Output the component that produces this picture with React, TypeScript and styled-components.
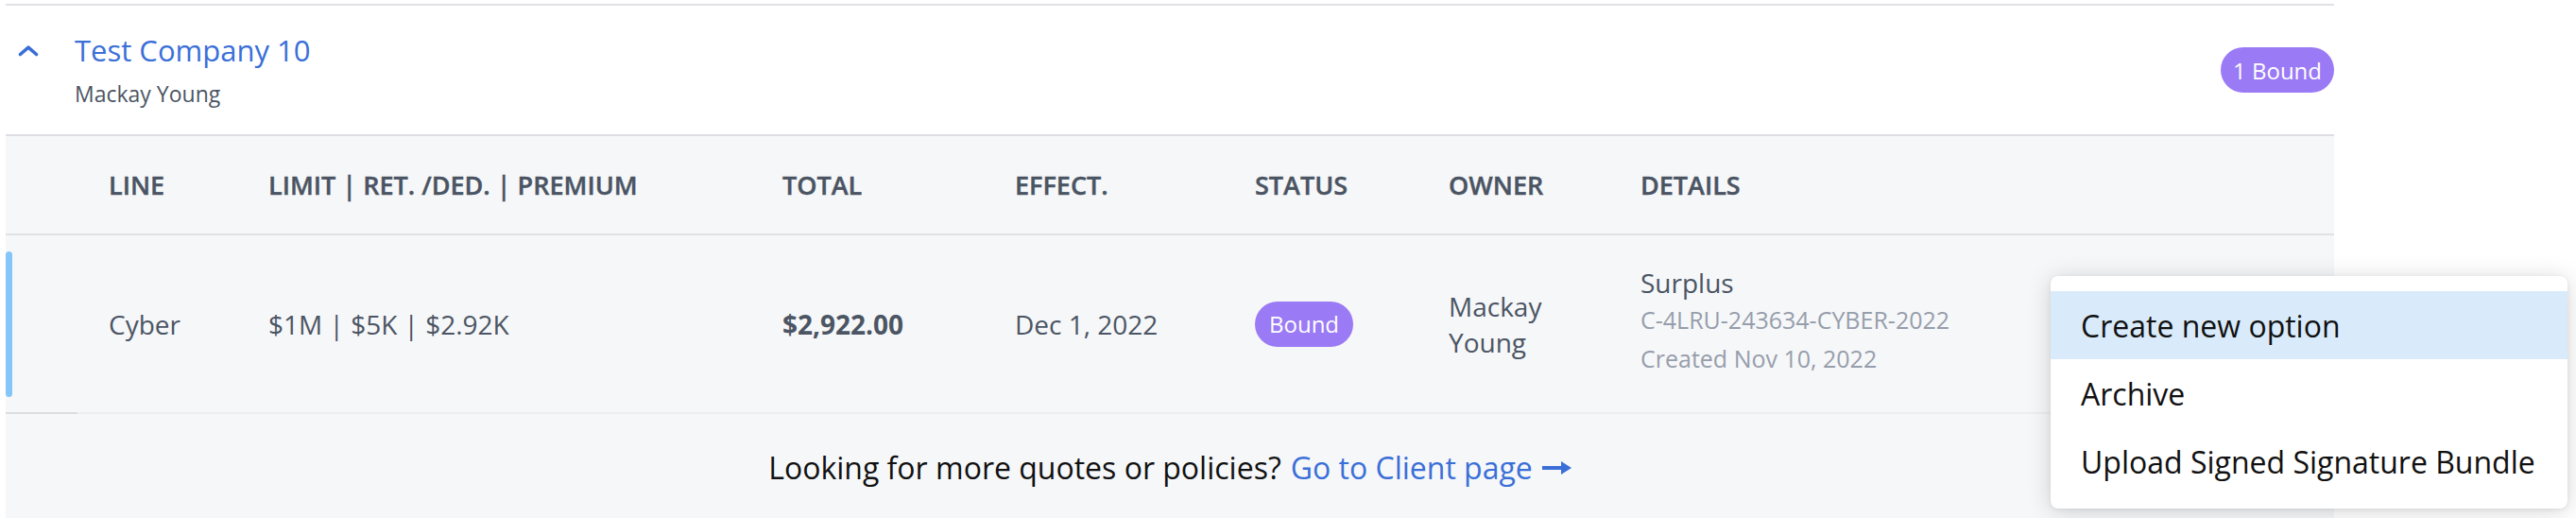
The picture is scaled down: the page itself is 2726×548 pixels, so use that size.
import React from "react";
import styled, { createGlobalStyle } from "styled-components";

const GlobalStyle = createGlobalStyle`
  html, body { margin: 0; padding: 0; background: #ffffff; }
  body { font-family: "Open Sans", "Noto Sans", Arial, sans-serif; }
  * { box-sizing: border-box; }
`;

const Page = styled.div`
  position: relative;
  width: 2726px;
  height: 548px;
  overflow: hidden;
  padding: 4px 0 0 6px;
  background: #ffffff;
`;

const Card = styled.section`
  width: 2464px;
  border-top: 2px solid #dfe1e5;
  display: flex;
  flex-direction: column;
`;

const GroupHeader = styled.header`
  display: flex;
  align-items: center;
  min-height: 138px;
  padding-left: 13px;
  background: #ffffff;
  border-bottom: 2px solid #dcdee2;
`;

const Chevron = styled.svg`
  align-self: flex-start;
  width: 22px;
  height: 12px;
  flex: none;
  margin: 42px 38px 0 0;
`;

const TitleBlock = styled.div`
  display: flex;
  flex-direction: column;
  flex: 1;
`;

const Title = styled.a`
  font-size: 31px;
  line-height: 40px;
  color: #3a6fd8;
  text-decoration: none;
`;

const Subtitle = styled.div`
  margin-top: 10px;
  font-size: 23px;
  line-height: 32px;
  color: #4b5563;
`;

const Pill = styled.span<{ $w: number }>`
  display: inline-flex;
  align-items: center;
  justify-content: center;
  width: ${(p) => p.$w}px;
  height: 48px;
  border-radius: 24px;
  background: #9a7af5;
  color: #ffffff;
  font-size: 24px;
  font-weight: 500;
  white-space: nowrap;
`;

const gridCols = "109px 169px 544px 246px 254px 205px 203px 1fr";

const HeadRow = styled.div`
  display: grid;
  grid-template-columns: ${gridCols};
  align-items: center;
  height: 105px;
  background: #f6f7f9;
  border-bottom: 2px solid #dfe1e5;
`;

const HeadCell = styled.div`
  font-size: 27px;
  font-weight: 600;
  color: #4a5463;
  text-transform: uppercase;
  white-space: nowrap;
  -webkit-text-stroke: 0.4px #4a5463;
`;

const DataRow = styled.div`
  position: relative;
  display: grid;
  grid-template-columns: ${gridCols};
  align-items: center;
  min-height: 189px;
  background: #f6f7f9;
  border-bottom: 2px solid #eceef1;
  &::after {
    content: "";
    position: absolute;
    left: 0;
    bottom: -2px;
    width: 76px;
    height: 2px;
    background: #dcdde1;
  }
`;

const ActiveBar = styled.div`
  align-self: stretch;
  width: 7px;
  margin: 17px 0 16px;
  border-radius: 4px;
  background: #84c6fa;
`;

const Cell = styled.div<{ $bold?: boolean }>`
  font-size: 28px;
  line-height: 40px;
  color: #4b5563;
  font-weight: ${(p) => (p.$bold ? 700 : 400)};
  white-space: nowrap;
`;

const OwnerCell = styled.div`
  width: 140px;
  font-size: 28px;
  line-height: 38px;
  color: #4b5563;
`;

const Details = styled.div`
  display: flex;
  flex-direction: column;
  margin-top: -6px;
`;

const DetailMain = styled.div`
  font-size: 28px;
  line-height: 38px;
  color: #4b5563;
`;

const DetailSub = styled.div`
  font-size: 25px;
  line-height: 41px;
  color: #969eab;
`;

const Footer = styled.footer`
  display: flex;
  justify-content: center;
  align-items: center;
  gap: 10px;
  padding: 35px 0 60px;
  background: #f6f7f9;
  font-size: 32px;
  line-height: 44px;
  color: #111111;
`;

const FooterLink = styled.a`
  display: inline-flex;
  align-items: center;
  gap: 10px;
  color: #3a6fd8;
  text-decoration: none;
`;

const Menu = styled.ul`
  position: absolute;
  left: 2170px;
  top: 292px;
  width: 547px;
  margin: 0;
  padding: 16px 0 14px;
  list-style: none;
  background: #ffffff;
  border-radius: 8px;
  box-shadow: 0 3px 26px rgba(0, 0, 0, 0.16), 0 1px 4px rgba(0, 0, 0, 0.08);
`;

const MenuItem = styled.li<{ $active?: boolean }>`
  display: flex;
  align-items: center;
  height: 72px;
  padding-left: 32px;
  font-size: 32px;
  color: #111111;
  background: ${(p) => (p.$active ? "#d9ebfa" : "transparent")};
  white-space: nowrap;
`;

const headers = ["LINE", "LIMIT | RET. /DED. | PREMIUM", "TOTAL", "EFFECT.", "STATUS", "OWNER", "DETAILS"];

export default function App() {
  return (
    <Page>
      <GlobalStyle />
      <Card>
        <GroupHeader>
          <Chevron viewBox="0 0 22 12" aria-hidden>
            <polyline
              points="2.5,9.5 11,2.2 19.5,9.5"
              fill="none"
              stroke="#3a6fd8"
              strokeWidth="3.6"
              strokeLinecap="round"
              strokeLinejoin="round"
            />
          </Chevron>
          <TitleBlock>
            <Title>Test Company 10</Title>
            <Subtitle>Mackay Young</Subtitle>
          </TitleBlock>
          <Pill $w={120}>1 Bound</Pill>
        </GroupHeader>

        <HeadRow>
          <div />
          {headers.map((h) => (
            <HeadCell key={h}>{h}</HeadCell>
          ))}
        </HeadRow>

        <DataRow>
          <ActiveBar />
          <Cell>Cyber</Cell>
          <Cell>$1M | $5K | $2.92K</Cell>
          <Cell $bold>$2,922.00</Cell>
          <Cell>Dec 1, 2022</Cell>
          <div>
            <Pill $w={104}>Bound</Pill>
          </div>
          <OwnerCell>Mackay Young</OwnerCell>
          <Details>
            <DetailMain>Surplus</DetailMain>
            <DetailSub>C-4LRU-243634-CYBER-2022</DetailSub>
            <DetailSub>Created Nov 10, 2022</DetailSub>
          </Details>
        </DataRow>

        <Footer>
          <span>Looking for more quotes or policies?</span>
          <FooterLink>
            Go to Client page
            <svg width="31" height="14" viewBox="0 0 31 14" aria-hidden>
              <rect x="0" y="5" width="22" height="4" fill="#3a6fd8" />
              <polygon points="20,0 31,7 20,14" fill="#3a6fd8" />
            </svg>
          </FooterLink>
        </Footer>
      </Card>

      <Menu>
        <MenuItem $active>Create new option</MenuItem>
        <MenuItem>Archive</MenuItem>
        <MenuItem>Upload Signed Signature Bundle</MenuItem>
      </Menu>
    </Page>
  );
}
